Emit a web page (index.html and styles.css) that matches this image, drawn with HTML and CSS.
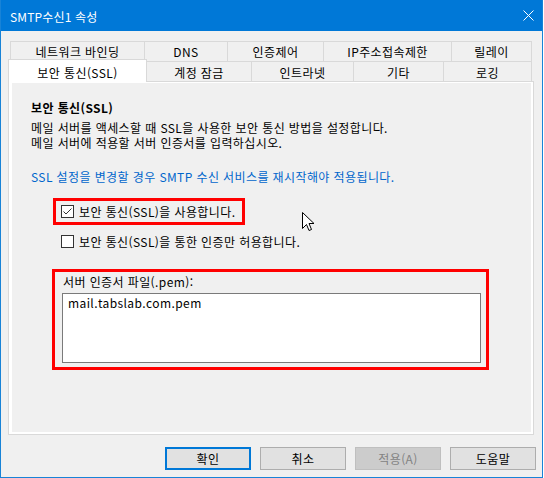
FILE: index.html
```html
<!DOCTYPE html>
<html lang="ko">
<head>
<meta charset="utf-8">
<title>SMTP수신1 속성</title>
<link rel="stylesheet" href="styles.css">
</head>
<body>
<div class="window">
  <div class="titlebar">
    <span class="title">SMTP수신1 속성</span>
    <svg class="close" width="11" height="11" viewBox="0 0 11 11"><path d="M0.5 0.5L10.5 10.5M10.5 0.5L0.5 10.5" stroke="#fff" stroke-width="1" fill="none"/></svg>
  </div>
  <div class="tabs">
    <div class="row row1">
      <div class="tab t1">네트워크 바인딩</div>
      <div class="tab t2">DNS</div>
      <div class="tab t3">인증제어</div>
      <div class="tab t4">IP주소접속제한</div>
      <div class="tab t5">릴레이</div>
    </div>
    <div class="row row2">
      <div class="tab sel">보안 통신(SSL)</div>
      <div class="tab t7">계정 잠금</div>
      <div class="tab t8">인트라넷</div>
      <div class="tab t9">기타</div>
      <div class="tab t10">로깅</div>
    </div>
  </div>
  <div class="panel">
    <div class="content">
      <div class="heading">보안 통신(SSL)</div>
      <div class="desc">메일 서버를 액세스할 때 SSL을 사용한 보안 통신 방법을 설정합니다.</div>
      <div class="desc desc2">메일 서버에 적용할 서버 인증서를 입력하십시오.</div>
      <div class="note">SSL 설정을 변경할 경우 SMTP 수신 서비스를 재시작해야 적용됩니다.</div>
      <div class="mark mark-check">
        <div class="check">
          <span class="box"><svg width="11" height="11" viewBox="0 0 11 11"><path d="M1.5 5.5L4 8L9.5 2.5" stroke="#333" stroke-width="1" fill="none"/></svg></span>
          <span>보안 통신(SSL)을 사용합니다.</span>
        </div>
      </div>
      <div class="check check2">
        <span class="box"></span>
        <span>보안 통신(SSL)을 통한 인증만 허용합니다.</span>
      </div>
      <div class="mark mark-file">
        <div class="file-label">서버 인증서 파일(.pem):</div>
        <div class="textbox">mail.tabslab.com.pem</div>
      </div>
    </div>
  </div>
  <div class="buttons">
    <div class="btn default">확인</div>
    <div class="btn">취소</div>
    <div class="btn disabled">적용(A)</div>
    <div class="btn">도움말</div>
  </div>
  <svg class="cursor" width="13" height="20" viewBox="0 0 13 20"><path d="M0.5 0.5L0.5 16.5L4.5 12.5L7 18.5L9.5 17.5L7 11.5L12 11.5Z" fill="#fff" stroke="#000" stroke-width="1" stroke-linejoin="miter"/></svg>
</div>
</body>
</html>
```
FILE: styles.css
```css
body {
  margin: 0;
  background: #ffffff;
  font-family: "Noto Sans CJK KR", "Noto Sans", sans-serif;
  font-size: 12px;
  letter-spacing: 0.4px;
  color: #000;
}
.window {
  position: relative;
  width: 543px;
  height: 478px;
  box-sizing: border-box;
  border: 1px solid #1883d7;
  border-top: 0;
  background: #f0f0f0;
  display: flex;
  flex-direction: column;
}
.titlebar {
  flex: none;
  height: 31px;
  background: #0078d7;
  color: #fff;
  display: flex;
  align-items: center;
  justify-content: space-between;
  padding: 0 8px 0 9px;
}
.title {
  line-height: 15px;
  padding-top: 1px;
  letter-spacing: 0.15px;
}
.close { display: block; }
.tabs {
  flex: none;
  margin: 10px 0 0 9px;
}
.row {
  display: flex;
  height: 21px;
}
.row2 {
  margin-top: -1px;
  align-items: flex-end;
}
.tab {
  flex: none;
  box-sizing: border-box;
  height: 21px;
  border: 1px solid #d9d9d9;
  background: #f0f0f0;
  margin-left: -1px;
  display: flex;
  align-items: center;
  justify-content: center;
  line-height: 15px;
  white-space: nowrap;
}
.tab:first-child { margin-left: 0; }
.t1 { width: 135px; }
.t2 { width: 84px; }
.t3 { width: 97px; }
.t4 { width: 129px; }
.t5 { width: 81px; }
.t7 { width: 106px; }
.t8 { width: 103px; }
.t9 { width: 91px; }
.t10 { width: 89px; }
.row2 .tab { padding-top: 2px; }
.tab.sel {
  width: 139px;
  height: 23px;
  margin-left: -2px;
  background: #fff;
  border-bottom: 0;
  position: relative;
  z-index: 1;
  padding-top: 2px;
}
.panel {
  flex: none;
  margin: -1px 0 0 7px;
  width: 526px;
  height: 354px;
  box-sizing: border-box;
  border: 1px solid #d9d9d9;
  background: #fff;
  padding: 1px 2px 2px 3px;
}
.content {
  height: 100%;
  background: #f0f0f0;
  overflow: hidden;
}
.heading {
  margin: 17px 0 0 19px;
  font-weight: bold;
  line-height: 15px;
}
.desc {
  margin: 5px 0 0 19px;
  line-height: 15px;
  height: 15px;
  white-space: nowrap;
}
.desc2 { margin-top: 0; }
.note {
  margin: 19px 0 0 19px;
  line-height: 15px;
  color: #0066cc;
  white-space: nowrap;
}
.mark {
  box-sizing: border-box;
  border: 3px solid #ff0000;
}
.mark-check {
  margin: 14px 0 0 41px;
  width: 192px;
  height: 27px;
  padding-left: 5px;
  display: flex;
  align-items: center;
}
.check {
  display: flex;
  align-items: center;
  gap: 5px;
  height: 21px;
  line-height: 15px;
  white-space: nowrap;
}
.check2 {
  margin: 6px 0 0 49px;
}
.box {
  box-sizing: border-box;
  width: 13px;
  height: 13px;
  border: 1px solid #333;
  background: #fff;
  flex: none;
}
.box svg { display: block; }
.mark-file {
  margin: 17px 0 0 40px;
  width: 437px;
  height: 101px;
  padding: 2px 0 0 7px;
}
.file-label {
  line-height: 15px;
  padding-left: 1px;
}
.textbox {
  margin-top: 4px;
  box-sizing: border-box;
  width: 419px;
  height: 70px;
  border: 1px solid #7a7a7a;
  background: #fff;
  padding: 1px 0 0 5px;
  line-height: 15px;
}
.buttons {
  flex: none;
  display: flex;
  justify-content: flex-end;
  gap: 9px;
  margin-top: 12px;
  padding-right: 6px;
}
.btn {
  box-sizing: border-box;
  width: 86px;
  height: 23px;
  border: 1px solid #adadad;
  background: #e1e1e1;
  display: flex;
  align-items: center;
  justify-content: center;
  line-height: 15px;
}
.btn.default {
  border: 2px solid #0078d7;
}
.btn.disabled {
  background: #cccccc;
  border-color: #bfbfbf;
  color: #838383;
}
.cursor {
  position: absolute;
  left: 301px;
  top: 212px;
}
```
